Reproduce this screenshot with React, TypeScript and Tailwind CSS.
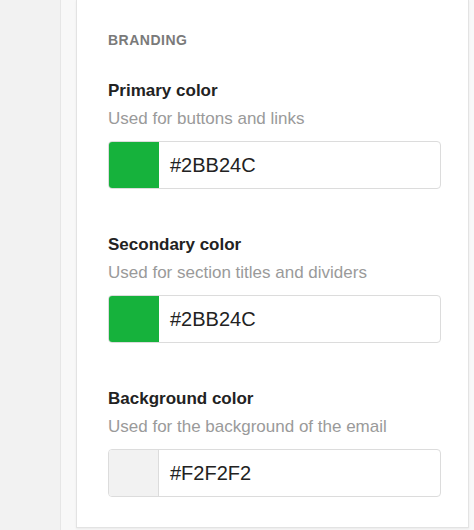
import React from 'react';

interface ColorFieldProps {
  label: string;
  hint: string;
  value: string;
  swatchClass: string;
}

const ColorField: React.FC<ColorFieldProps> = ({ label, hint, value, swatchClass }) => {
  return (
    <div className="flex flex-col">
      <div className="text-[17px] leading-[24px] font-bold text-[#222]">{label}</div>
      <div className="mt-[4px] text-[17px] leading-[24px] text-[#9a9a9a]">{hint}</div>
      <div className="mt-[10px] flex h-[48px] w-[333px] overflow-hidden rounded-[4px] border border-[#dcdcdc] bg-white">
        <div className={`w-[50px] shrink-0 ${swatchClass}`} />
        <div className="flex items-center pl-[11px] text-[20px] text-[#222]">{value}</div>
      </div>
    </div>
  );
};

const App: React.FC = () => {
  return (
    <div
      className="flex h-[530px] w-[474px] overflow-hidden bg-[#f8f8f8]"
      style={{ fontFamily: '"Liberation Sans", Arial, sans-serif' }}
    >
      {/* sidebar */}
      <div className="h-full w-[61px] shrink-0 border-r border-[#e6e6e6] bg-[#f2f2f2]" />

      <div className="ml-[15px] flex flex-col">
        <div className="flex h-[528px] w-[393px] flex-col border border-t-0 border-[#e3e3e3] bg-white pt-[30px] pl-[31px] shadow-[0_1px_2px_rgba(0,0,0,0.06)]">
          <div className="text-[14px] leading-[20px] font-bold tracking-[0.5px] text-[#7a7a7a]">BRANDING</div>

          <div className="mt-[29px] flex flex-col gap-[44px]">
            <ColorField
              label="Primary color"
              hint="Used for buttons and links"
              value="#2BB24C"
              swatchClass="bg-[#16b23c]"
            />
            <ColorField
              label="Secondary color"
              hint="Used for section titles and dividers"
              value="#2BB24C"
              swatchClass="bg-[#16b23c]"
            />
            <ColorField
              label="Background color"
              hint="Used for the background of the email"
              value="#F2F2F2"
              swatchClass="bg-[#f2f2f2] border-r border-[#dcdcdc]"
            />
          </div>
        </div>
      </div>
    </div>
  );
};

export default App;
